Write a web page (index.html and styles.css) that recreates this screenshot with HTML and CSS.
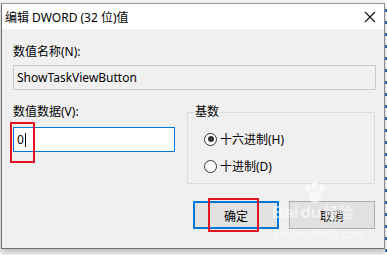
FILE: index.html
```html
<!DOCTYPE html>
<html lang="zh-CN">
<head>
  <meta charset="UTF-8">
  <title>编辑 DWORD (32 位)值</title>
  <link rel="stylesheet" href="styles.css">
</head>
<body>
  <div class="desk-strip"></div>

  <div class="window">
    <div class="titlebar">
      <span class="title">编辑 DWORD (32 位)值</span>
      <span class="close">
        <svg width="12" height="12" viewBox="0 0 12 12">
          <path d="M1 1 L11 11 M11 1 L1 11" stroke="#111" stroke-width="1.1" fill="none"/>
        </svg>
      </span>
    </div>

    <div class="content">
      <div class="label">数值名称(N):</div>
      <div class="name-box">ShowTaskViewButton</div>

      <div class="lower">
        <div class="value-col">
          <div class="label">数值数据(V):</div>
          <div class="value-box">0<span class="caret"></span></div>
        </div>

        <fieldset class="radix">
          <legend>基数</legend>
          <div class="radio-row">
            <span class="radio checked"></span>
            <span>十六进制(H)</span>
          </div>
          <div class="radio-row">
            <span class="radio"></span>
            <span>十进制(D)</span>
          </div>
        </fieldset>
      </div>

      <div class="buttons">
        <button class="btn btn-default">确定</button>
        <button class="btn">取消</button>
      </div>
    </div>

    <!-- red annotation boxes -->
    <div class="mark mark-value"></div>
    <div class="mark mark-ok"></div>

    <!-- watermark -->
    <div class="watermark">
      <svg class="paw" width="26" height="22" viewBox="0 0 26 22">
        <g fill="#fff">
          <ellipse cx="6" cy="6" rx="3" ry="3.5"/>
          <ellipse cx="13" cy="3.5" rx="3" ry="3.5"/>
          <ellipse cx="20" cy="6" rx="3" ry="3.5"/>
          <ellipse cx="13" cy="15" rx="7" ry="5.5"/>
        </g>
      </svg>
      <div class="wm-logo">Bai<span class="wm-du">du</span><span class="wm-cn">经验</span></div>
      <div class="wm-url">jingyan.baidu.com</div>
    </div>
  </div>
</body>
</html>
```

FILE: styles.css
```css
body {
  margin: 0;
  width: 387px;
  height: 255px;
  overflow: hidden;
  background-color: #f4f4f4;
  font-family: "Noto Sans", "Noto Sans CJK SC", sans-serif;
  font-size: 12px;
  color: #000;
  position: relative;
}

.desk-strip {
  position: absolute;
  top: 0;
  right: 0;
  width: 2px;
  height: 255px;
  background: repeating-linear-gradient(#ffffff 0, #ffffff 9px, #2a6fbf 9px, #2a6fbf 12px);
}

.window {
  position: relative;
  margin: 3px 0 0 1px;
  width: 382px;
  height: 244px;
  border: 1px solid #6f6f6f;
  border-top-color: #9a9a9a;
  border-right-color: #8a8a8a;
  background-color: #f0f0f0;
  box-shadow: 0 3px 6px rgba(0, 0, 0, 0.25);
}

.titlebar {
  height: 25px;
  background-color: #fff;
  display: flex;
  align-items: center;
  justify-content: space-between;
  padding: 0 8px 0 3px;
}

.title {
  font-size: 12px;
  line-height: 16px;
  padding-top: 2px;
}

.close {
  display: flex;
  padding-top: 1px;
}

.content {
  padding: 15px 8px 0 11px;
}

.label {
  line-height: 16px;
  height: 16px;
}

.name-box {
  margin-top: 5px;
  height: 23px;
  border: 1px solid #cccccc;
  background-color: #f0f0f0;
  padding-left: 3px;
  line-height: 23px;
}

.lower {
  display: flex;
  gap: 12px;
  margin-top: 14px;
}

.value-col {
  width: 162px;
}

.value-box {
  margin-top: 7px;
  height: 23px;
  border: 1px solid #0078d7;
  background-color: #fff;
  padding-left: 3px;
  line-height: 23px;
  display: flex;
  align-items: center;
}

.caret {
  display: inline-block;
  width: 1px;
  height: 14px;
  margin-left: 1px;
  background-color: #000;
}

.radix {
  width: 188px;
  box-sizing: border-box;
  margin: 0;
  border: 1px solid #dcdcdc;
  padding: 11px 0 9px 16px;
}

.radix legend {
  padding: 0 1px;
  margin-left: -10px;
  line-height: 16px;
}

.radio-row {
  display: flex;
  align-items: center;
  gap: 3px;
  height: 16px;
}

.radio-row + .radio-row {
  margin-top: 11px;
}

.radio {
  width: 11px;
  height: 11px;
  border: 1px solid #333;
  border-radius: 50%;
  background-color: #fff;
  display: flex;
  align-items: center;
  justify-content: center;
}

.radio.checked::after {
  content: "";
  width: 6px;
  height: 6px;
  border-radius: 50%;
  background-color: #333;
}

.buttons {
  display: flex;
  justify-content: flex-end;
  gap: 10px;
  margin-top: 17px;
  padding-right: 1px;
}

.btn {
  width: 86px;
  height: 28px;
  border: 1px solid #adadad;
  background-color: #e1e1e1;
  font-family: "Noto Sans CJK SC", sans-serif;
  font-size: 12px;
  color: #000;
  padding: 0;
}

.btn-default {
  border: 2px solid #0078d7;
}

.mark {
  position: absolute;
  border: 2px solid #e3141f;
}

.mark-value {
  left: 8px;
  top: 118px;
  width: 21px;
  height: 37px;
}

.mark-ok {
  left: 206px;
  top: 194px;
  width: 47px;
  height: 30px;
}

.watermark {
  position: absolute;
  left: 270px;
  top: 178px;
  width: 95px;
  color: rgba(255, 255, 255, 0.6);
  pointer-events: none;
}

.paw {
  position: absolute;
  left: 30px;
  top: 0;
  opacity: 0.6;
}

.wm-logo {
  position: absolute;
  top: 20px;
  left: 0;
  font-family: "Liberation Sans", sans-serif;
  font-weight: bold;
  font-size: 17px;
  line-height: 20px;
  white-space: nowrap;
}

.wm-du {
  margin-left: 2px;
}

.wm-cn {
  font-family: "Noto Sans CJK SC", sans-serif;
  font-size: 15px;
  margin-left: 2px;
}

.wm-url {
  position: absolute;
  top: 46px;
  left: 2px;
  font-family: "Liberation Sans", sans-serif;
  font-size: 11px;
  white-space: nowrap;
}
```
